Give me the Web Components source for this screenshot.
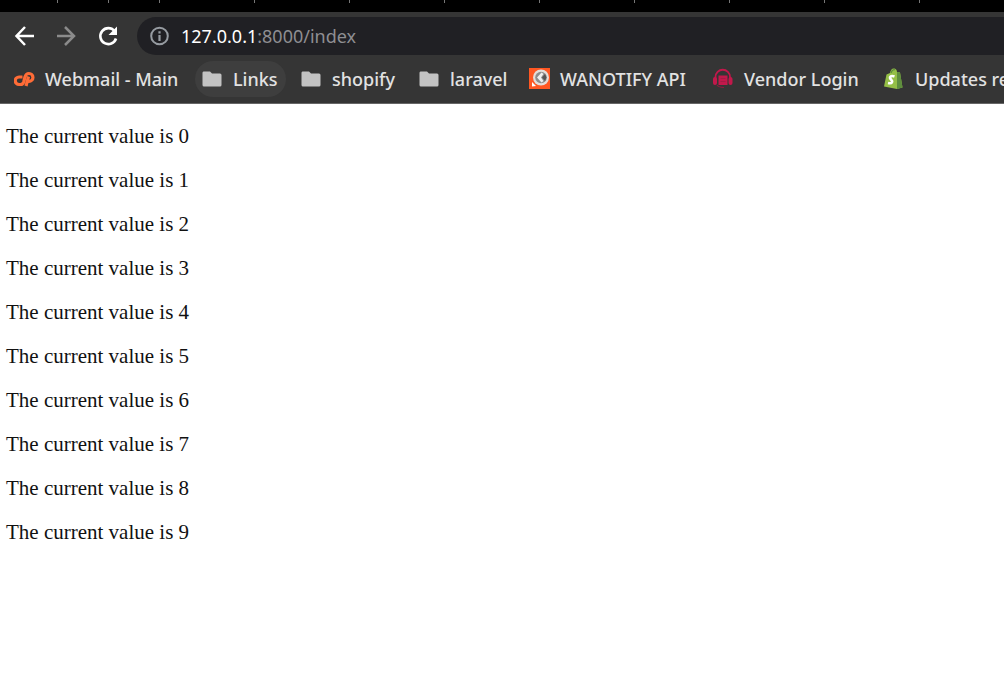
<!DOCTYPE html>
<html lang="en">
<head>
<meta charset="utf-8">
<title>127.0.0.1:8000/index</title>
<style>
html,body{margin:0;background:#fff}
body{overflow-x:hidden}
</style>
</head>
<body>
<browser-window>
  <tab-strip slot="chrome"></tab-strip>
  <nav-toolbar slot="chrome" host="127.0.0.1" path=":8000/index"></nav-toolbar>
  <bookmarks-bar slot="chrome">
    <bookmark-item icon="cpanel">Webmail - Main</bookmark-item>
    <bookmark-item icon="folder" active>Links</bookmark-item>
    <bookmark-item icon="folder">shopify</bookmark-item>
    <bookmark-item icon="folder">laravel</bookmark-item>
    <bookmark-item icon="wanotify">WANOTIFY API</bookmark-item>
    <bookmark-item icon="headset">Vendor Login</bookmark-item>
    <bookmark-item icon="shopify">Updates re</bookmark-item>
  </bookmarks-bar>
  <value-list count="10"></value-list>
</browser-window>
<script>
const ICONS = {
  cpanel: `<g fill="none" stroke="#ff6c37" stroke-width="3.200"><path d="M8.500 9H5a3.600 3.600 0 0 0 0 7.500H6.500c2 0 2.700-.8 3.200-2.500L11 9c.6-2.500 1.500-3.500 4-3.500a3.900 3.900 0 0 1 0 7.900H12.500"/><path d="M14.500 8.500L12 18"/></g>`,
  folder: `<path fill="#c3c3c3" d="M1.500 3.500h6.500l2 2H18a1.500 1.500 0 0 1 1.500 1.500V17a1.500 1.500 0 0 1-1.500 1.500h-16A1.500 1.500 0 0 1 .500 17V5a1.500 1.500 0 0 1 1-1.500z"/>`,
  wanotify: `<path fill="#ff5722" d="M0 0h21v21H0z"/><circle cx="12" cy="9.500" r="8" fill="#e4ddd9"/><circle cx="12" cy="9.500" r="5.800" fill="#8c8c8c"/><path fill="#eee" d="M12.500 4.500L8 9.500l4.500 5 2-1.500-2.500-3.500 2.500-3.500z"/><path fill="#555" d="M16 6l-3 3.500 3 3.500 1.500-3.500z"/><path fill="#fff" d="M3 14l4 4-4 .5z"/>`,
  headset: `<path fill="none" stroke="#c2184b" stroke-width="1.800" d="M2.500 11V9a7 7 0 0 1 14.500 0v2"/><path fill="none" stroke="#8f1b40" stroke-width="1.200" d="M4 17c1.500 2 4 2.500 7 2.500"/><rect x="0" y="9" width="4" height="8" rx="2" fill="#c2184b"/><rect x="15.500" y="9" width="4" height="8" rx="2" fill="#c2184b"/><path fill="#c2184b" d="M5.500 7.500h9v9.500h-9z"/><path fill="none" stroke="#a51a45" d="M7.500 10.500h5M7.500 13.500h5"/>`,
  shopify: `<path fill="#95bf47" d="M2.500 6.500L6 5c.5-3 2-5 4.500-4.500C12 1 13 2 13 4l3 .5 2.500 15L13 21 0 18.500z"/><path fill="#5e8e3e" d="M13 4l3 .5 2.500 15L13 21z"/><path fill="none" stroke="#5e8e3e" stroke-width="1.200" d="M7 5c1-3 3-4 4-3"/><path fill="none" stroke="#fff" stroke-width="2.600" d="M10.500 8.500C6.500 7 5 9.500 7 11.500s1.500 4.500-3 3.500"/>`
};

class BaseElement extends HTMLElement {
  connectedCallback() {
    if (!this.shadowRoot) this.attachShadow({mode: "open"}).innerHTML = this.render();
  }
}

customElements.define("browser-window", class extends BaseElement {
  render() {
    return `<style>
      :host{display:block;background:#fff}
      header{background:#353535;border-bottom:1px solid #666;overflow:hidden}
    </style><header><slot name="chrome"></slot></header><main><slot></slot></main>`;
  }
});

customElements.define("tab-strip", class extends BaseElement {
  render() {
    return `<style>
      :host{display:flex;height:12px;background:#000;overflow:hidden}
      i{box-sizing:border-box;flex:none;width:95px;height:3px;border-right:1px solid #777}
      .first{width:58px}.pinned{width:51px}
    </style><i class="first"></i><i class="pinned"></i><i class="pinned"></i>${"<i></i>".repeat(20)}`;
  }
});

customElements.define("nav-toolbar", class extends BaseElement {
  render() {
    return `<style>
      :host{display:flex;align-items:center;height:48px;padding-left:14px;font:18px/24px "Noto Sans",sans-serif}
      button{flex:none;width:22px;height:22px;margin-right:20px;padding:0;border:0;background:none}
      button:last-of-type{margin-right:17px}
      svg{display:block}
      .address{display:flex;align-items:center;flex:1;min-width:0;height:38px;padding-left:13px;gap:12px;border-radius:19px 0 0 19px;background:#202024}
      a{color:#8e8e92;text-decoration:none}
      b{font-weight:400;color:#fff}
    </style>
    <button aria-label="Back"><svg width="22" height="22" fill="none" stroke="#fff" stroke-width="2.500"><path d="M20 11H3M11 2L2.500 11l8.500 9"/></svg></button>
    <button aria-label="Forward"><svg width="22" height="22" fill="none" stroke="#8b8b8b" stroke-width="2.500"><path d="M1 11h17M9 2l9 9-9 9"/></svg></button>
    <button aria-label="Reload"><svg width="22" height="22" fill="none" stroke="#fff" stroke-width="2.600"><path d="M16.500 6a8 8 0 1 0 1.500 7.500"/><path fill="#fff" stroke="none" d="M19 1.500v8.500h-8.500z"/></svg></button>
    <div class="address">
      <svg width="19" height="20" fill="none" stroke="#969ba1" stroke-width="2" aria-hidden="true"><circle cx="9.500" cy="10" r="8.300"/><path stroke-width="2.200" d="M9.500 9v6M9.500 5.200v2.200"/></svg>
      <a href="#"><b>${this.getAttribute("host")}</b>${this.getAttribute("path")}</a>
    </div>`;
  }
});

customElements.define("bookmarks-bar", class extends BaseElement {
  render() {
    return `<style>
      :host{display:block;padding:1px 0 6px 7px}
      nav{display:grid;grid-template-columns:188px 99px 118px 110px 184px 171px max-content;justify-items:start}
    </style><nav aria-label="Bookmarks"><slot></slot></nav>`;
  }
});

customElements.define("bookmark-item", class extends BaseElement {
  render() {
    return `<style>
      :host{display:block;font:500 18px/24px "Noto Sans",sans-serif;color:#e2e2e2}
      a{display:flex;align-items:center;gap:9px;height:36px;padding:0 8px 0 7px;border-radius:18px;color:inherit;text-decoration:none;white-space:nowrap}
      :host([active]) a{background:#3e3e3e}
      svg{flex:none}
    </style><a href="#"><svg width="22" height="22" aria-hidden="true">${ICONS[this.getAttribute("icon")]}</svg><span><slot></slot></span></a>`;
  }
});

customElements.define("value-list", class extends BaseElement {
  render() {
    const count = Number(this.getAttribute("count"));
    return `<style>
      :host{display:block;padding:0 6px;font:21px/24px "Liberation Serif",serif;color:#111}
      p{margin:20px 0}
    </style>${Array.from({length: count}, (_, i) => `<p>The current value is ${i}</p>`).join("")}`;
  }
});
</script>
</body>
</html>
